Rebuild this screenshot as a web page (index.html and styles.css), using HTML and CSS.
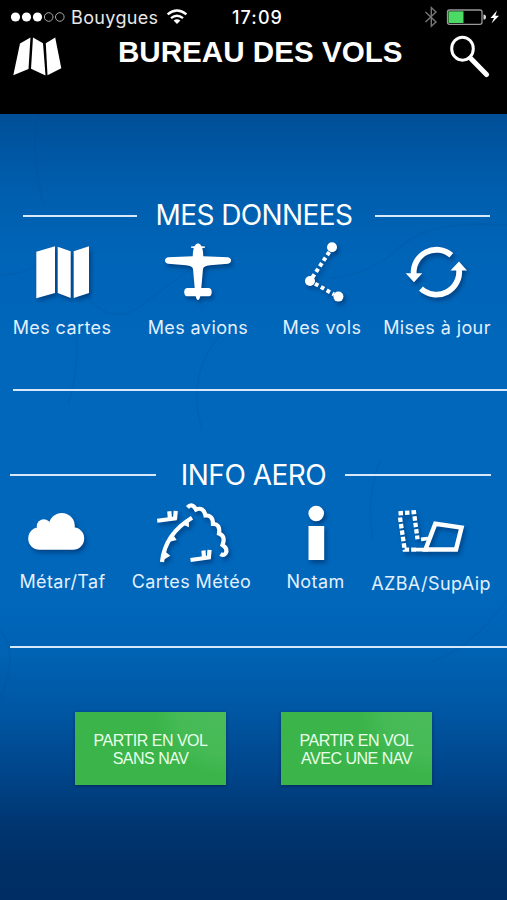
FILE: index.html
```html
<!DOCTYPE html>
<html lang="fr">
<head>
<meta charset="utf-8">
<title>Bureau des vols</title>
<link rel="stylesheet" href="styles.css">
</head>
<body>
<header class="top">
  <div class="status">
    <svg class="signal" width="56" height="14" viewBox="10 10 56 14"><g fill="#fff"><circle cx="15.5" cy="17" r="4.6"/><circle cx="26.5" cy="17" r="4.6"/><circle cx="37.5" cy="17" r="4.6"/></g><g fill="none" stroke="#aaa" stroke-width="1"><circle cx="48.7" cy="17" r="4.3"/><circle cx="59.8" cy="17" r="4.3"/></g></svg>
    <span class="carrier">Bouygues</span>
    <svg class="wifi" width="22" height="18" viewBox="166 8 22 18"><g fill="none" stroke="#fff" stroke-width="2.3"><path d="M167.6 14.4Q177 6.6 186.4 14.4"/><path d="M171 18.2Q177 13.2 183 18.2"/></g><path d="M173.6 20.6Q177 18 180.4 20.6L177 24Z" fill="#fff"/></svg>
    <span class="clock">17:09</span>
    <svg class="power" width="78" height="24" viewBox="422 5 78 24"><path d="M425.5 12L436 22L431.3 26.2V7.6L436 12L425.5 22" fill="none" stroke="#777" stroke-width="1.4"/><rect x="447.5" y="10" width="34.5" height="14.3" rx="2" fill="none" stroke="#999" stroke-width="1.3"/><rect x="448.5" y="11.3" width="15" height="11.7" fill="#4cd964"/><path d="M483.5 14.5Q486 14.5 486 17Q486 19.6 483.5 19.6Z" fill="#ddd"/><path d="M497 10.5L490.5 18H494L491.5 23.5L499 15.7H495.3Z" fill="#fff"/></svg>
  </div>
  <div class="navbar">
    <svg class="nav-map" width="52" height="42" viewBox="12 35 52 42"><g fill="#fff"><path d="M20 43.5L30.5 37.5L28.5 69L13.3 75.3Z"/><path d="M33 37.5L43 43.3L45.5 75.5L31 68.7Z"/><path d="M45.8 43.3L55.2 37.5L61.3 68.3L47.5 75.3Z"/></g></svg>
    <h1>BUREAU DES VOLS</h1>
    <svg class="nav-search" width="42" height="44" viewBox="449 34 42 44"><g fill="none" stroke="#fff"><ellipse cx="462.5" cy="48.7" rx="10.8" ry="11.5" stroke-width="3"/><path d="M470.8 58.5L486.5 74.5" stroke-width="5" stroke-linecap="round"/></g></svg>
  </div>
</header>
<main>
  <svg class="relief" width="507" height="786" viewBox="0 114 507 786"><path d="M38 114Q30 160 44 205M0 275Q35 274 45 255M82 290Q110 330 142 305T205 260M74 320Q82 360 68 405M330 278Q370 275 400 247T507 225M225 330Q185 370 202 430M380 460Q365 500 373 540M507 600Q470 650 430 662M0 700Q20 650 0 630"/></svg>

  <section class="group data">
    <div class="heading"><i></i><h2>MES DONNEES</h2><i></i></div>
    <div class="tiles">
      <a class="tile"><svg width="84" height="66" viewBox="20 239 84 66"><path d="M36.3 251.7L55 246.3V293L36.3 298.3ZM57.7 246.7L70.7 251.3V298L57.7 293ZM73.7 251.3L89 246.3V293L73.7 298Z"/></svg><span>Mes cartes</span></a>
      <a class="tile"><svg width="84" height="66" viewBox="156 239 84 66"><path d="M198 243.2Q200.5 243.5 201.5 246.3L205 246.5V247.7L202.3 248Q203.3 252 203.3 256.3L228 257.3Q231 258 231 260.5Q231 263 228 263.7L210 265.3Q203.5 266 203 269L201.3 288H209Q211.7 288.5 211.7 292Q211.7 296 209 296.3H200.3Q199.5 300 198 300Q196.5 300 195.7 296.3H187Q184.2 296 184.2 292Q184.2 288.5 187 288H194.7L193 269Q192.5 266 186 265.3L168 263.7Q165 263 165 260.5Q165 258 168 257.3L192.7 256.3Q192.7 252 193.7 248L191 247.7V246.5L194.5 246.3Q195.5 243.5 198 243.2Z"/></svg><span>Mes avions</span></a>
      <a class="tile"><svg width="84" height="66" viewBox="280 239 84 66"><path class="line" d="M329.3 252L312 278M315 283.7L334 294.4" stroke-width="4" stroke-dasharray="3.8 2.9"/><circle cx="332" cy="247.3" r="5"/><circle cx="310" cy="281" r="5"/><circle cx="338.4" cy="296.6" r="5"/></svg><span>Mes vols</span></a>
      <a class="tile"><svg width="84" height="66" viewBox="395 239 84 66"><path class="line" stroke-width="5.8" d="M451.3 255.3A22.8 22.8 0 0 0 413.7 274.5M421 288.7A22.8 22.8 0 0 0 459 269"/><path d="M405.7 273.2H422.3L414 282.2ZM450.5 270.5H467L459 261.5Z"/></svg><span>Mises à jour</span></a>
    </div>
  </section>
  <hr class="rule first">

  <section class="group info">
    <div class="heading"><i></i><h2>INFO AERO</h2><i></i></div>
    <div class="tiles">
      <a class="tile"><svg width="84" height="66" viewBox="20.5 500 84 66"><rect x="27.7" y="527.3" width="56" height="22.5" rx="11.2"/><circle cx="61.3" cy="526" r="13"/><circle cx="43.3" cy="526.3" r="7"/></svg><span>Métar/Taf</span></a>
      <a class="tile"><svg width="84" height="66" viewBox="149.5 500 84 66"><g class="line"><path stroke-width="4" d="M156.7 520.8L176 518.3M190 560L210 557.2"/><path stroke-width="4.2" d="M168.8 511.3L169.5 519.5M175.2 510.8L174.5 519.5M203 550.5L203.5 558.500M209 549.8L208.300 558.500"/><path stroke-width="4.2" d="M161.5 562Q164.5 534 191.5 517.8"/><path stroke-width="4.2" d="M187 507.5Q191.5 502.500 195.5 509.5Q203 506.5 205 515.5Q212.5 515 212.5 524Q220 524 218.5 533.5Q225.5 536 222 545Q228 549 225 553.5Q223 556 220 554"/></g><path d="M163.500 550.5L169.8 555.8L162 560.5ZM171 532.500L176.2 540L168 542ZM181 524L188.5 527.300L188.2 519Z"/></svg><span>Cartes Météo</span></a>
      <a class="tile"><svg width="84" height="66" viewBox="273.5 500 84 66"><circle cx="315.7" cy="513.5" r="7.8"/><rect x="308" y="526" width="15.7" height="34"/></svg><span>Notam</span></a>
      <a class="tile low"><svg width="84" height="66" viewBox="389 500 84 66"><g class="line"><path stroke-width="4.3" stroke-dasharray="4.5 2" d="M398.5 513.3L414 512.3L417.5 539.3M400 517.5L404.7 549.7H416"/><path stroke-width="3.7" d="M421 539.3L428 538.5M415 549.7H428"/><path stroke-width="4.5" d="M435.3 523.7L461.5 527.5L456 549.5H425.5Z"/></g></svg><span>AZBA/SupAip</span></a>
    </div>
  </section>
  <hr class="rule second">

  <div class="actions">
    <button>PARTIR EN VOL<br>SANS NAV</button>
    <button>PARTIR EN VOL<br>AVEC UNE NAV</button>
  </div>
</main>
</body>
</html>
```
FILE: styles.css
```css
* { box-sizing: border-box; }
body {
  margin: 0;
  width: 507px;
  height: 900px;
  overflow: hidden;
  background: #002f66;
  color: #fff;
  font-family: Inter, "Liberation Sans", sans-serif;
}
svg { display: block; flex: none; }
.top { height: 114px; background: #000; }
.status {
  display: flex;
  align-items: center;
  height: 34px;
  padding-left: 10px;
  font-size: 18px;
  line-height: 34px;
}
.carrier { width: 95px; padding: 1px 0 0 5px; letter-spacing: 0.35px; color: #e8e8e8; }
.wifi { margin-left: 5px; }
.clock { width: 190px; margin-left: 44px; padding-top: 1px; font-weight: 500; letter-spacing: 1.1px; }
.navbar { display: flex; height: 44px; padding: 0 16px 0 12px; }
.nav-map { margin-top: 1px; }
h1 {
  flex: 1;
  margin: 0 0 0 54px;
  font: bold 29.6px/36px "Liberation Sans", Arial, sans-serif;
  white-space: nowrap;
}
main {
  position: relative;
  height: 786px;
  padding-top: 85px;
  background: linear-gradient(#004f98 0, #005dac 70px, #0064b7 140px, #0067bb 240px, #0067bb 480px, #0062b3 540px, #0056a2 600px, #00458a 660px, #003671 710px, #002f66 750px, #002e64 100%);
}
.relief { position: absolute; left: 0; top: 0; fill: none; stroke: #003c7c; stroke-width: 2; opacity: 0.09; }
.group { position: relative; }
.heading { display: grid; align-items: center; height: 34px; }
.heading i { height: 2px; background: #d6e8fa; }
.data .heading { grid-template-columns: 114px 238px 115px; padding-left: 23px; }
.info .heading { grid-template-columns: 146px 189px 146px; padding-left: 10px; }
h2 { margin: -2px 0 0; font-size: 28px; font-weight: 400; line-height: 34px; letter-spacing: -0.6px; text-align: center; white-space: nowrap; }
.data h2 { padding-right: 4px; }
.info h2 { margin-top: 0; padding-left: 6px; letter-spacing: -0.5px; }
.tiles { display: grid; }
.data .tiles { grid-template-columns: 124px 148px 100px 130px; padding-top: 6px; }
.info .tiles { grid-template-columns: 125px 133px 115px 116px; padding-top: 8px; }
.tile { display: flex; flex-direction: column; align-items: center; font-size: 18px; line-height: 24px; letter-spacing: 0.4px; white-space: nowrap; color: #e2f0ff; }
.tile svg { fill: #fff; filter: drop-shadow(2px 3px 2px rgba(0, 25, 70, 0.45)); }
.tile span { margin-top: 11px; }
.info .tile span { margin-top: 4px; }
.info .low span { margin-top: 6px; }
.line { fill: none; stroke: #fff; }
.rule { position: relative; height: 2px; margin: 0; border: 0; background: #d6e8fa; }
.first { margin: 49px 0 67px 13px; }
.second { margin: 50px 0 0 10px; }
.actions { position: relative; display: flex; gap: 55px; padding: 64px 0 0 75px; }
button {
  width: 151px;
  height: 73px;
  padding: 2px 0 0;
  border: 0;
  color: #e9ffea;
  font: 16px/18px "Liberation Sans", Arial, sans-serif;
  letter-spacing: -0.5px;
  background: radial-gradient(ellipse 70px 62px at 100% 0, #49bc59 0, #45ba55 70%, #3bb54a 100%);
  box-shadow: 0 1px 3px rgba(0, 25, 60, 0.6);
}
```
